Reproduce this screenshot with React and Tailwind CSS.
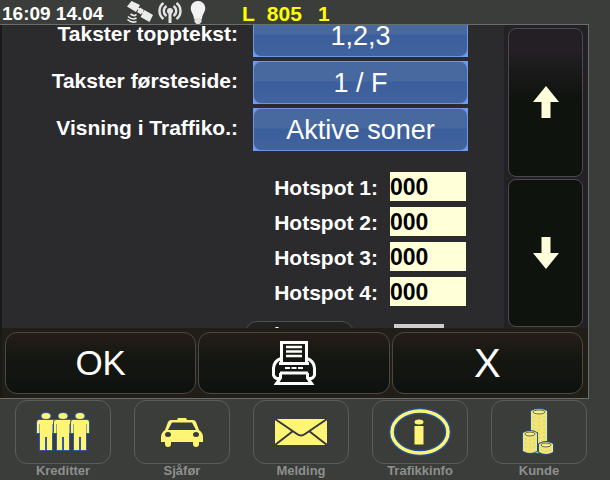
import { useState } from 'react'

const SETTINGS = [
  { id: 'topptekst', label: 'Takster topptekst:', value: '1,2,3' },
  { id: 'forsteside', label: 'Takster førsteside:', value: '1 / F' },
  { id: 'visning', label: 'Visning i Traffiko.:', value: 'Aktive soner' },
]

const NAV = [
  { label: 'Kreditter', Icon: PeopleIcon },
  { label: 'Sjåfør', Icon: TaxiIcon },
  { label: 'Melding', Icon: MailIcon },
  { label: 'Trafikkinfo', Icon: InfoIcon },
  { label: 'Kunde', Icon: CoinsIcon },
]

function SatelliteIcon() {
  return (
    <svg width="28" height="24" viewBox="0 0 28 24" fill="none" stroke="#ececec" aria-hidden="true">
      <path d="M5.500 1l8.500 4-4 7-9-5.500z" fill="#ececec" stroke="none" />
      <path d="M18.500 10l8.500 5-3.500 7-9-5z" fill="#ececec" stroke="none" />
      <path d="M10 7l9 7" strokeWidth="2" />
      <path d="M14 7.500l4 2.500-3 4.500-4-2.500z" fill="#ececec" stroke="none" />
      <path d="M10.500 14.500q-2 2.500-6-.5M10.500 18q-4 2.500-8.500-1.500M10.500 21.500q-5 2-9-2" strokeWidth="1.600" />
    </svg>
  )
}

function AntennaIcon() {
  return (
    <svg width="24" height="24" viewBox="0 0 24 24" fill="none" stroke="#e4e4e4" strokeWidth="2.400" aria-hidden="true">
      <circle cx="12" cy="11" r="3" fill="#e4e4e4" stroke="none" />
      <path d="M12 11v12" strokeWidth="3" />
      <path d="M8.500 6a6 6 0 0 0 0 10M15.500 6a6 6 0 0 1 0 10M5.500 3a10 10 0 0 0 0 16M18.500 3a10 10 0 0 1 0 16" />
    </svg>
  )
}

function BulbIcon() {
  return (
    <svg width="16" height="24" viewBox="0 0 16 24" fill="#f2f2f2" aria-hidden="true">
      <path d="M8 1a7 7 0 0 1 7.300 7c0 4-3 6-3.300 11H4C3.700 14 .7 12 .7 8A7 7 0 0 1 8 1z" />
      <path d="M4.500 18h7v4l-2 2h-3l-2-2z" fill="#e2e2e2" />
    </svg>
  )
}

function ArrowIcon({ className = '' }) {
  return (
    <svg width="26" height="32" viewBox="0 0 26 32" fill="#ffffdc" className={className} aria-hidden="true">
      <path d="M13 0L26 16H17.500V32H8.500V16H0z" />
    </svg>
  )
}

function PrinterIcon() {
  return (
    <svg width="46" height="46" viewBox="0 0 46 46" fill="none" stroke="#fff" strokeWidth="3" aria-hidden="true">
      <path d="M10.500 22V2.500h25V22" />
      <path d="M15 7h16M15 11.500h16M15 16h16" strokeWidth="2.500" />
      <path d="M10 18.500Q3 21 2.500 28v7q1 3 3.500 3.500h3M36 18.500q7 2.500 7.500 9.500v7q-1 3-3.500 3.500h-3" />
      <path d="M8 23.500h30" />
      <path d="M14 28h5M20.500 28h5M27 28h5" strokeWidth="2" />
      <path d="M9 33h28M9.500 33v5L5.500 43.500h35L36.500 38v-5" />
    </svg>
  )
}

function PeopleIcon() {
  return (
    <svg width="56" height="40" viewBox="0 0 56 40" aria-hidden="true">
      <g fill="#fff474" stroke="#3159a0" strokeWidth="2" paintOrder="stroke">
        {[11, 28, 45].map(x => (
          <g key={x} transform={`translate(${x} 0)`}>
            <path d="M-7 8H7Q9 8 9 11V21H6.500V12H6V38H1V25H-1V38H-6V12H-6.500V21H-9V11Q-9 8-7 8z" />
            <ellipse cx="0" cy="4" rx="4.500" ry="3" />
          </g>
        ))}
      </g>
    </svg>
  )
}

function TaxiIcon() {
  return (
    <svg width="44" height="32" viewBox="0 0 44 32" aria-hidden="true">
      <path
        d="M18 2h8l1 2h6q2 0 3 2l3 8q4 3 4 7v5h-4v2q0 3-3 3t-3-3v-2H11v2q0 3-3 3t-3-3v-2H1v-5q0-4 4-7l3-8q1-2 3-2h6z"
        fill="#fff474"
      />
      <path d="M12 6.500h20l4 7.500H8z" fill="#363b3c" />
      <ellipse cx="8" cy="18.500" rx="3" ry="2.500" fill="#363b3c" />
      <ellipse cx="36" cy="18.500" rx="3" ry="2.500" fill="#363b3c" />
    </svg>
  )
}

function MailIcon() {
  return (
    <svg width="54" height="28" viewBox="0 0 54 28" aria-hidden="true">
      <path d="M1 1h52v26H1z" fill="#fff474" />
      <path
        d="M1 1l22 15q4 3 8 0L53 1M1 27l18-14M53 27L35 13"
        fill="none"
        stroke="#34393b"
        strokeWidth="2"
      />
    </svg>
  )
}

function InfoIcon() {
  return (
    <svg width="64" height="50" viewBox="0 0 64 50" aria-hidden="true">
      <ellipse cx="32" cy="25" rx="28" ry="21" fill="none" stroke="#2453a0" strokeWidth="6" />
      <ellipse cx="32" cy="25" rx="28" ry="21" fill="none" stroke="#fff474" strokeWidth="3.500" />
      <ellipse cx="31" cy="15" rx="4.500" ry="2.500" fill="#fff474" />
      <path d="M26.500 19h9v18.500h-9z" fill="#fff474" />
    </svg>
  )
}

function Coins({ x, y, rx, h }) {
  return (
    <g transform={`translate(${x} ${y})`}>
      <path
        d={`M${-rx} 0V${h}Q0 ${h + 4} ${rx} ${h}V0Q0-4 ${-rx} 0z`}
        fill="#f0e678"
        stroke="#23509c"
        strokeWidth="2"
        paintOrder="stroke"
      />
      <path
        d={`M${3 - rx} 5V${h}M0 6V${h + 1}M${rx - 3} 5V${h}`}
        stroke="#d9ce62"
        strokeDasharray="2 2"
        fill="none"
      />
      <ellipse cx="0" cy="1" rx={rx - 2} ry="2" fill="#f6ee8a" stroke="#6d6a3c" />
    </g>
  )
}

function CoinsIcon() {
  return (
    <svg width="36" height="50" viewBox="0 0 36 50" aria-hidden="true">
      <Coins x={18} y={4} rx={8} h={40} />
      <Coins x={9} y={26} rx={7} h={18} />
      <Coins x={25} y={37} rx={7} h={8} />
    </svg>
  )
}

const ACTION =
  'flex-1 flex items-center justify-center rounded-xl border border-[#4b4844] text-white bg-linear-to-b from-[#261d19] via-[#151711] via-40% to-[#0e120f]'

export default function App() {
  const [hotspots, setHotspots] = useState(['000', '000', '000', '000'])

  const updateHotspot = (index, value) => {
    setHotspots(hotspots.map((h, i) => (i === index ? value : h)))
  }

  return (
    <div className="h-screen flex flex-col overflow-hidden bg-[#3b3d3a] font-['Liberation_Sans',Arial,sans-serif]">
      {/* Status bar */}
      <header className="h-6 shrink-0 flex items-center pl-[2px] text-[19px] leading-6 font-bold text-white">
        <span className="w-[124px] pt-1 whitespace-nowrap">16:09 14.04</span>
        <div className="flex items-center gap-1">
          <SatelliteIcon />
          <AntennaIcon />
          <span className="pl-1">
            <BulbIcon />
          </span>
        </div>
        <div className="flex gap-3 pl-9 pt-1 text-[21px] text-[#ffff00]">
          <span>L</span>
          <span>805</span>
          <span className="pl-1">1</span>
        </div>
      </header>

      <main className="flex-1 min-h-0 mr-[21px] flex flex-col border-t border-r border-b border-[#6a6e69] bg-[#2b2a2d]">
        <div className="flex-1 min-h-0 flex border-l-2 border-[#171b18]">
          {/* Settings list */}
          <div className="flex-1 min-w-0 overflow-hidden">
            <div className="-mt-[11px] flex flex-col gap-1 pr-9">
              {SETTINGS.map(s => (
                <div key={s.id} className="flex items-center gap-[15px]">
                  <label htmlFor={s.id} className="flex-1 pb-1 text-right text-[21px] leading-6 font-bold text-white whitespace-nowrap">
                    {s.label}
                  </label>
                  <div className="w-[215px] bg-[#6b9cf4]">
                    <button
                      id={s.id}
                      className="block w-full h-[43px] rounded-lg border border-[#6f96dc] bg-linear-to-b from-[#48699f] from-45% via-[#3b5f9c] via-50% to-[#41639f] text-[27px] leading-10 text-white"
                    >
                      {s.value}
                    </button>
                  </div>
                </div>
              ))}
            </div>

            <div className="mt-[21px] flex flex-col gap-[6px] pr-[38px]">
              {hotspots.map((value, i) => (
                <div key={i} className="flex items-center justify-end gap-3">
                  <label htmlFor={`hotspot-${i}`} className="pt-[2px] text-[21px] leading-6 font-bold text-white">
                    Hotspot {i + 1}:
                  </label>
                  <input
                    id={`hotspot-${i}`}
                    type="text"
                    value={value}
                    onChange={e => updateHotspot(i, e.target.value)}
                    className="w-[76px] h-[29px] pt-[2px] bg-[#ffffd8] text-[23px] font-bold text-black outline-none"
                  />
                </div>
              ))}
            </div>

            <div className="mt-[15px] flex items-start justify-end gap-10 pr-[60px]">
              <button className="w-[109px] h-10 rounded-xl border border-[#4c514c] bg-[#202321] flex items-start pt-[3px] pl-7 text-[21px] font-bold leading-5 text-white">
                i
              </button>
              <input type="text" aria-label="i" className="mt-[3px] w-[50px] h-7 bg-[#cfccd0]" />
            </div>
          </div>

          {/* Scroll buttons */}
          <div className="w-[84px] shrink-0 flex flex-col gap-[2px] bg-[#232125] pt-[3px] pb-[1px] pl-1 pr-[5px]">
            <button
              aria-label="Opp"
              className="flex-1 flex items-center justify-center rounded-lg border border-[#4c494e] bg-linear-to-b from-[#231f24] from-15% via-[#191919] via-30% to-[#0e130e] to-50%"
            >
              <ArrowIcon />
            </button>
            <button
              aria-label="Ned"
              className="flex-1 flex items-center justify-center rounded-lg border border-[#4c494e] bg-[#0e130e]"
            >
              <ArrowIcon className="rotate-180" />
            </button>
          </div>
        </div>

        <div className="shrink-0 flex gap-[2px] h-[70px] border-l-2 border-[#171b18] bg-[#201e17] pl-[3px] pr-[5px] pt-1 pb-1">
          <button className={`${ACTION} text-[35px]`}>OK</button>
          <button className={ACTION} aria-label="Skriv ut">
            <PrinterIcon />
          </button>
          <button className={`${ACTION} text-[40px]`}>X</button>
        </div>
      </main>

      {/* Bottom navigation */}
      <nav className="shrink-0 h-[81px] flex justify-between pt-[1px] pl-[15px] pr-[23px]">
        {NAV.map(({ label, Icon }) => (
          <button key={label} className="w-24 flex flex-col items-center">
            <span className="w-full h-16 flex items-center justify-center rounded-xl border border-[#5b5d5c]">
              <Icon />
            </span>
            <span className="text-[13px] leading-[14px] font-bold text-[#8d8f8e]">{label}</span>
          </button>
        ))}
      </nav>
    </div>
  )
}
